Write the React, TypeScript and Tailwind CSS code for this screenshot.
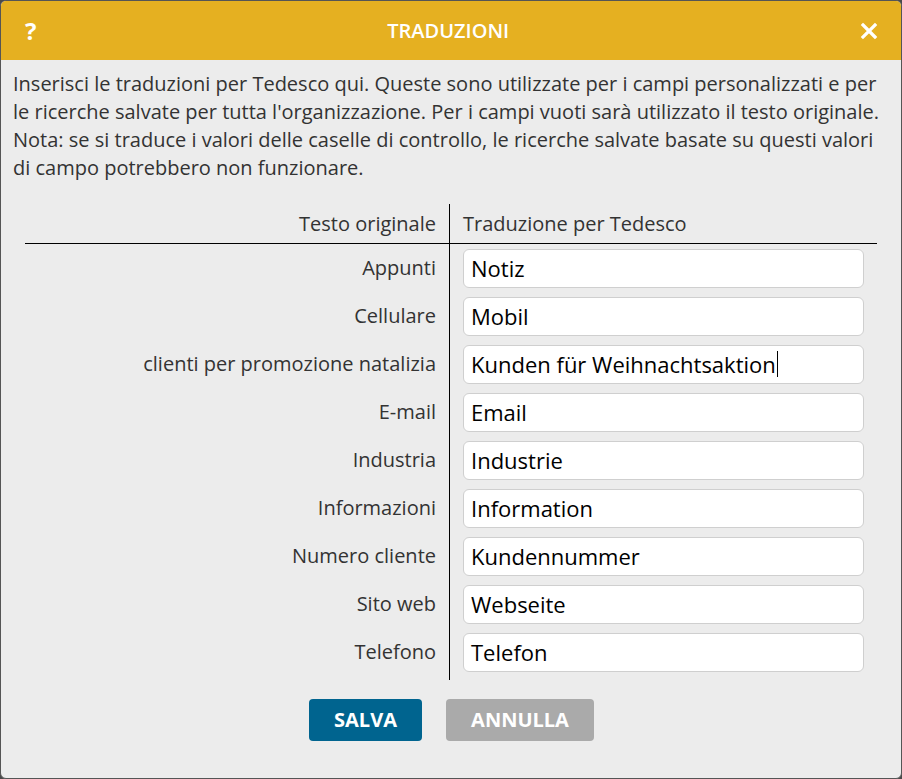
import React from 'react';

const rows = [
  { label: 'Appunti', value: 'Notiz' },
  { label: 'Cellulare', value: 'Mobil' },
  { label: 'clienti per promozione natalizia', value: 'Kunden für Weihnachtsaktion', focused: true },
  { label: 'E-mail', value: 'Email' },
  { label: 'Industria', value: 'Industrie' },
  { label: 'Informazioni', value: 'Information' },
  { label: 'Numero cliente', value: 'Kundennummer' },
  { label: 'Sito web', value: 'Webseite' },
  { label: 'Telefono', value: 'Telefon' },
];

export default function App() {
  return (
    <div className="w-[902px] h-[779px] bg-[#4a4a4a] font-['Open_Sans',sans-serif]">
      <div className="w-full h-full flex flex-col border border-[#555] rounded-[6px] overflow-hidden bg-[#ececec]">
        <div className="h-[59px] shrink-0 bg-[#e5b021] flex items-center justify-between pl-[24px] pr-[22px] text-white">
          <span className="text-[24px] font-bold leading-none">?</span>
          <span className="text-[20px] font-semibold">TRADUZIONI</span>
          <svg width="18" height="18" viewBox="0 0 18 18" className="mr-[1px]">
            <path d="M3 3 L15 15 M15 3 L3 15" stroke="white" strokeWidth="3.2" strokeLinecap="square" />
          </svg>
        </div>

        <p className="px-[12px] pt-[10px] text-[20px] leading-[28px] text-[#333]">
          Inserisci le traduzioni per Tedesco qui. Queste sono utilizzate per i campi personalizzati e per
          le ricerche salvate per tutta l'organizzazione. Per i campi vuoti sarà utilizzato il testo originale.
          Nota: se si traduce i valori delle caselle di controllo, le ricerche salvate basate su questi valori
          di campo potrebbero non funzionare.
        </p>

        <div className="mx-[24px] mt-[22px] text-[20px] text-[#333]">
          <div className="grid grid-cols-[425px_1fr] border-b border-black">
            <div className="h-[39px] flex items-center justify-end pr-[13px] border-r border-black">Testo originale</div>
            <div className="h-[39px] flex items-center pl-[13px]">Traduzione per Tedesco</div>
          </div>
          {rows.map((r) => (
            <div key={r.label} className="grid grid-cols-[425px_1fr]">
              <div className="h-[48px] flex items-center justify-end pr-[13px] border-r border-black">{r.label}</div>
              <div className="h-[48px] flex items-center pl-[13px] pr-[13px]">
                <div className="w-full h-[39px] bg-white border border-[#cfcfcf] rounded-[6px] flex items-center px-[7px] text-[22px] text-black">
                  {r.value}
                  {r.focused && <span className="inline-block w-[1.5px] h-[26px] bg-black ml-[1px]" />}
                </div>
              </div>
            </div>
          ))}
          <div className="grid grid-cols-[425px_1fr]">
            <div className="h-[4px] border-r border-black" />
          </div>
        </div>

        <div className="flex justify-center gap-[24px] mt-[19px] pl-[1px]">
          <button className="w-[113px] h-[42px] rounded-[4px] bg-[#00648f] text-white font-bold text-[20px]">SALVA</button>
          <button className="w-[148px] h-[42px] rounded-[4px] bg-[#aaaaaa] text-white font-bold text-[20px]">ANNULLA</button>
        </div>
      </div>
    </div>
  );
}
